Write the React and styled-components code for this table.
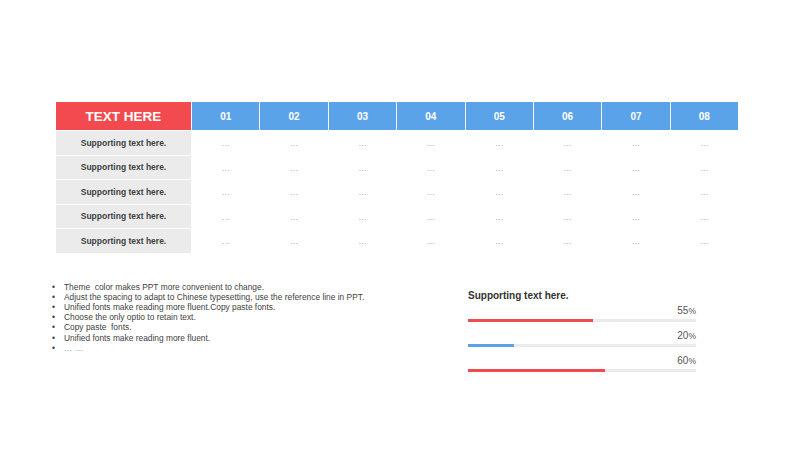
import React from 'react';
import styled, { createGlobalStyle } from 'styled-components';

const columns = ['01', '02', '03', '04', '05', '06', '07', '08'];
const rows = [1, 2, 3, 4, 5];

const bullets = [
  'Theme  color makes PPT more convenient to change.',
  'Adjust the spacing to adapt to Chinese typesetting, use the reference line in PPT.',
  'Unified fonts make reading more fluent.Copy paste fonts.',
  'Choose the only optio to retain text.',
  'Copy paste  fonts.',
  'Unified fonts make reading more fluent.',
  '… …',
];

const progress = [
  { value: 55, color: '#f04b50' },
  { value: 20, color: '#5aa2e6' },
  { value: 60, color: '#f04b50' },
];

const App = () => {
  return (
    <Page>
      <GlobalStyle />
      <Table>
        <TitleCell>TEXT HERE</TitleCell>
        {columns.map((c) => (
          <HeadCell key={c}>{c}</HeadCell>
        ))}
        {rows.map((r) => (
          <React.Fragment key={r}>
            <LabelCell>Supporting text here.</LabelCell>
            {columns.map((c) => (
              <DotCell key={c}>…</DotCell>
            ))}
          </React.Fragment>
        ))}
      </Table>

      <Bottom>
        <BulletList>
          {bullets.map((b, i) => (
            <BulletItem key={i} $muted={i === bullets.length - 1}>
              {b}
            </BulletItem>
          ))}
        </BulletList>

        <ProgressPanel>
          <PanelTitle>Supporting text here.</PanelTitle>
          {progress.map((p, i) => (
            <ProgressItem key={i}>
              <Percent>
                {p.value}
                <small>%</small>
              </Percent>
              <Track>
                <Fill $color={p.color} style={{ width: `${p.value}%` }} />
              </Track>
            </ProgressItem>
          ))}
        </ProgressPanel>
      </Bottom>
    </Page>
  );
};

// Styled components
const GlobalStyle = createGlobalStyle`
  html, body {
    margin: 0;
    padding: 0;
    background: #ffffff;
  }
  body {
    font-family: "Liberation Sans", Arial, sans-serif;
  }
`;

const Page = styled.div`
  width: 800px;
  height: 450px;
  box-sizing: border-box;
  padding: 102px 0 0 56px;
  overflow: hidden;
`;

const Table = styled.div`
  width: 682px;
  display: grid;
  grid-template-columns: 135px repeat(8, 1fr);
  grid-template-rows: 28px repeat(5, 23.5px);
  column-gap: 1px;
  row-gap: 1px;
`;

const TitleCell = styled.div`
  background: #f24a4f;
  color: #ffffff;
  font-weight: bold;
  font-size: 13.5px;
  display: flex;
  align-items: center;
  justify-content: center;
`;

const HeadCell = styled.div`
  background: #5ba3e8;
  color: #ffffff;
  font-weight: bold;
  font-size: 10px;
  display: flex;
  align-items: center;
  justify-content: center;
`;

const LabelCell = styled.div`
  background: #ebebeb;
  color: #404040;
  font-weight: bold;
  font-size: 8.5px;
  display: flex;
  align-items: center;
  justify-content: center;
`;

const DotCell = styled.div`
  color: #a8a8a8;
  font-size: 8.5px;
  display: flex;
  align-items: center;
  justify-content: center;
  padding-top: 1px;
`;

const Bottom = styled.div`
  margin: 29px 0 0 -6px;
  display: grid;
  grid-template-columns: 418px 228px;
  align-items: start;
`;

const BulletList = styled.ul`
  list-style: none;
  margin: 0;
  padding: 0;
`;

const BulletItem = styled.li`
  position: relative;
  padding-left: 14px;
  font-size: 8.4px;
  line-height: 10.2px;
  white-space: pre-wrap;
  color: ${(p) => (p.$muted ? '#9a9a9a' : '#3f3f3f')};

  &::before {
    content: '•';
    position: absolute;
    left: 2px;
    top: 0;
    color: #3f3f3f;
  }
`;

const ProgressPanel = styled.div`
  padding-top: 8px;
`;

const PanelTitle = styled.div`
  font-size: 10px;
  font-weight: bold;
  color: #333333;
  margin-bottom: 4px;
`;

const ProgressItem = styled.div`
  display: flex;
  flex-direction: column;
  margin-bottom: 8px;
`;

const Percent = styled.div`
  text-align: right;
  font-size: 10px;
  line-height: 12px;
  color: #555555;
  margin-bottom: 2px;

  small {
    font-size: 8.5px;
  }
`;

const Track = styled.div`
  height: 3px;
  background: #ebebeb;
`;

const Fill = styled.div`
  height: 100%;
  background: ${(p) => p.$color};
`;

export default App;
